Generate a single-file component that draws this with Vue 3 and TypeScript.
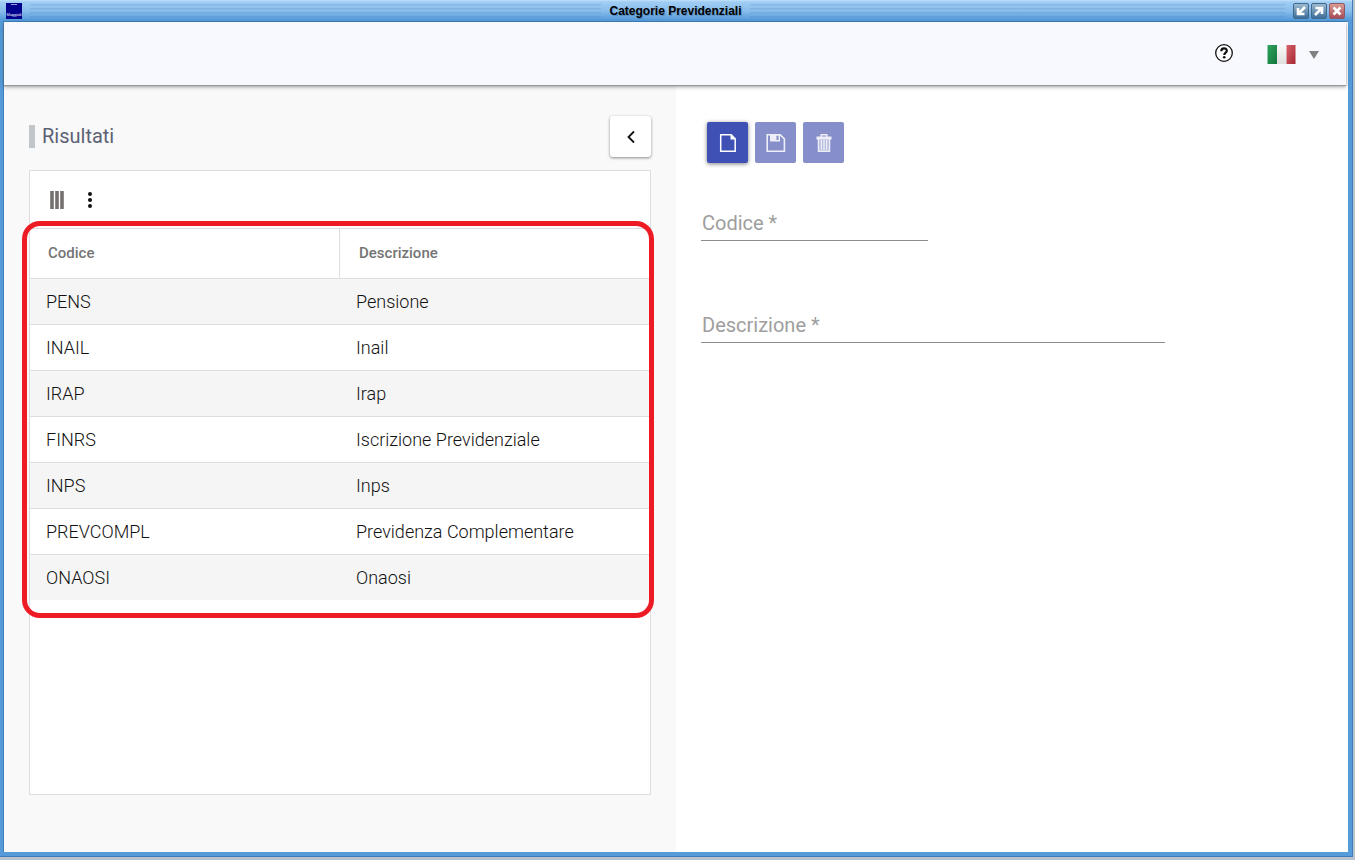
<script setup lang="ts">
import { ref } from 'vue'

interface Category {
  code: string
  description: string
}

const categories: Category[] = [
  { code: 'PENS', description: 'Pensione' },
  { code: 'INAIL', description: 'Inail' },
  { code: 'IRAP', description: 'Irap' },
  { code: 'FINRS', description: 'Iscrizione Previdenziale' },
  { code: 'INPS', description: 'Inps' },
  { code: 'PREVCOMPL', description: 'Previdenza Complementare' },
  { code: 'ONAOSI', description: 'Onaosi' },
]

const code = ref('')
const description = ref('')
</script>

<template>
  <div class="desktop">
    <div class="window">
      <header class="titlebar">
        <div class="side">
          <svg class="app-icon" viewBox="0 0 16 16" aria-hidden="true">
            <rect width="16" height="16" fill="#00008f" />
            <path d="M5 1.500h6" stroke="#9a9ad8" />
            <text x="8" y="13" text-anchor="middle">Maggioli</text>
          </svg>
          <span class="stripes"></span>
        </div>
        <h1 class="window-title">Categorie Previdenziali</h1>
        <div class="side">
          <span class="stripes"></span>
          <div class="window-buttons">
            <button type="button" class="win-btn" aria-label="Riduci">
              <svg viewBox="0 0 14 14"><path d="M11 3 5 9M4 4v6h6.500" /></svg>
            </button>
            <button type="button" class="win-btn" aria-label="Ingrandisci">
              <svg viewBox="0 0 14 14"><path d="M3 11l6-6M3.500 4H10v6" /></svg>
            </button>
            <button type="button" class="win-btn close" aria-label="Chiudi">
              <svg viewBox="0 0 14 14"><path d="M3.500 3.500l7 7M10.500 3.500l-7 7" /></svg>
            </button>
          </div>
        </div>
      </header>

      <div class="content">
        <div class="appbar">
          <button type="button" class="plain-btn" aria-label="Aiuto">
            <svg class="help" viewBox="0 0 20 20">
              <circle cx="10" cy="10" r="8.300" fill="#fff" stroke="#111" stroke-width="1.300" />
              <path d="M7.300 8.200c0-3.800 5.500-3.600 5.500-.5 0 1.900-2.500 2-2.500 4.300" fill="none" stroke="#111" stroke-width="2.200" />
              <circle cx="10.200" cy="14.300" r="1.300" fill="#111" />
            </svg>
          </button>
          <button type="button" class="plain-btn language" aria-label="Lingua: italiano" aria-haspopup="listbox">
            <svg class="flag" viewBox="0 0 28 19">
              <defs>
                <linearGradient id="green" x2="1" y2="1"><stop stop-color="#2fa35c" /><stop offset="1" stop-color="#11763c" /></linearGradient>
                <linearGradient id="white" x2="0" y2="1"><stop stop-color="#fafafa" /><stop offset="1" stop-color="#dedede" /></linearGradient>
                <linearGradient id="red" x2="1" y2="1"><stop stop-color="#d8636c" /><stop offset="1" stop-color="#a62730" /></linearGradient>
              </defs>
              <rect width="10" height="19" fill="url(#green)" />
              <rect x="9.500" width="9.500" height="19" fill="url(#white)" />
              <rect x="19" width="9" height="19" fill="url(#red)" />
            </svg>
            <svg class="caret" viewBox="0 0 10 8"><path d="M0 0h10L5 8z" fill="#808080" /></svg>
          </button>
        </div>

        <main class="panels">
          <section class="results">
            <div class="results-head">
              <h2 class="results-title">Risultati</h2>
              <button type="button" class="collapse" aria-label="Comprimi">
                <svg viewBox="0 0 12 14"><path d="M9 1.500 3.500 7 9 12.500" fill="none" stroke="#111" stroke-width="1.800" /></svg>
              </button>
            </div>

            <div class="card">
              <div class="card-tools">
                <button type="button" class="plain-btn" aria-label="Colonne">
                  <svg class="columns" viewBox="0 0 14 18"><path d="M2 0v18M7 0v18M12 0v18" stroke="#757070" stroke-width="3.600" /></svg>
                </button>
                <button type="button" class="plain-btn" aria-label="Altre azioni">
                  <svg class="dots" viewBox="0 0 4 18">
                    <circle cx="2" cy="3" r="2" /><circle cx="2" cy="9" r="2" /><circle cx="2" cy="15" r="2" />
                  </svg>
                </button>
              </div>
              <div class="table-wrap">
                <table>
                  <thead>
                    <tr><th scope="col">Codice</th><th scope="col">Descrizione</th></tr>
                  </thead>
                  <tbody>
                    <tr v-for="row in categories" :key="row.code">
                      <td>{{ row.code }}</td>
                      <td>{{ row.description }}</td>
                    </tr>
                  </tbody>
                </table>
                <div class="highlight"></div>
              </div>
            </div>
          </section>

          <form class="detail" @submit.prevent>
            <div class="actions">
              <button type="button" class="action" aria-label="Nuovo">
                <svg viewBox="0 0 20 20">
                  <path d="M2.700 1.700h10.500l4 4v12.600H2.700z" fill="none" stroke="#fff" stroke-width="1.500" />
                  <path d="M12.500 1.500v5h5z" fill="#fff" />
                </svg>
              </button>
              <button type="button" class="action" disabled aria-label="Salva">
                <svg viewBox="0 0 20 20">
                  <path d="M1.200 1.700h13l4.200 4.200v12.400H1.200z" fill="none" stroke="#fff" stroke-width="1.600" />
                  <path d="M4 1.500h10v7H4zM10.500 2.500v4.500h2V2.500z" fill="#fff" fill-rule="evenodd" />
                </svg>
              </button>
              <button type="button" class="action" disabled aria-label="Elimina">
                <svg viewBox="0 0 20 20">
                  <path d="M2.500 5h15" stroke="#fff" stroke-width="3" />
                  <path d="M4.500 6h11v12.500h-11z" fill="#fff" fill-opacity=".4" />
                  <path d="M7.200 4V1.800h5.600V4M4.500 6v12.300h11V6M7.400 7v10M10 7v10M12.600 7v10" fill="none" stroke="#fff" stroke-width="1.500" />
                </svg>
              </button>
            </div>
            <div class="field short">
              <label for="code">Codice *</label>
              <input id="code" v-model="code" type="text" placeholder=" " required />
            </div>
            <div class="field">
              <label for="description">Descrizione *</label>
              <input id="description" v-model="description" type="text" placeholder=" " required />
            </div>
          </form>
        </main>
      </div>
    </div>
  </div>
</template>

<style>
body {
  margin: 0;
}
</style>

<style scoped>
* {
  box-sizing: border-box;
}
.desktop {
  display: flex;
  min-height: 100vh;
  padding: 0 2px 3px 0;
  background: #b9c3ce;
  font-family: Roboto, "Liberation Sans", sans-serif;
}
.window {
  display: flex;
  flex: 1;
  flex-direction: column;
  border-right: 1px solid #3f7dba;
  border-bottom: 1px solid #3f7dba;
  background: #559bda;
}
.titlebar {
  display: grid;
  grid-template-columns: 1fr auto 1fr;
  align-items: center;
  gap: 8px;
  height: 21px;
  padding: 0 7px 0 6px;
  background: linear-gradient(#bfe0fa 0, #a0cdf3 2px, #89bdeb 11px, #559bda 20px);
}
.side {
  display: flex;
  align-items: center;
  gap: 8px;
}
.app-icon {
  width: 16px;
  height: 16px;
}
.app-icon text {
  fill: #fff;
  font: 400 4px/5px "Liberation Sans", sans-serif;
}
.stripes {
  flex: 1;
  height: 14px;
  background: repeating-linear-gradient(rgba(60, 125, 190, 0.2) 0, rgba(60, 125, 190, 0.2) 1px, transparent 2px, transparent 4px);
}
.window-title {
  margin: 0;
  color: #000;
  font: 700 12px/20px "Liberation Sans", Arial, sans-serif;
  text-shadow: 1px 1px 1px rgba(30, 80, 130, 0.4);
}
.window-buttons {
  display: flex;
  gap: 2px;
}
.win-btn {
  width: 16px;
  height: 16px;
  padding: 0;
  border: 1px solid #41698c;
  border-radius: 2px;
  background: linear-gradient(#9cb9d0, #3e6f99);
}
.win-btn.close {
  border-color: #8b5a68;
  background: linear-gradient(#d99b92, #a84b58);
}
.win-btn svg {
  display: block;
  width: 14px;
  height: 14px;
  fill: none;
  stroke: #fff;
  stroke-width: 2.6;
}
.content {
  display: flex;
  flex: 1;
  flex-direction: column;
  margin: 0 4px 4px 3px;
  border-top: 1px solid #3f7dba;
  border-left: 1px solid #3f7dba;
  background: #fff;
}
.appbar {
  z-index: 1;
  display: flex;
  align-items: center;
  justify-content: flex-end;
  gap: 33px;
  height: 63px;
  margin-right: 2px;
  padding: 0 27px 0 0;
  background: #f8f9fe;
  box-shadow: 0 1px 1px #999, 0 2px 4px rgba(0, 0, 0, 0.35);
}
.plain-btn {
  display: flex;
  align-items: center;
  padding: 0;
  border: 0;
  background: none;
}
.help {
  width: 20px;
  height: 20px;
  margin-bottom: 2px;
}
.language {
  gap: 13px;
  padding-top: 2px;
}
.flag {
  width: 29px;
  height: 19px;
}
.caret {
  width: 10px;
  height: 8px;
}
.panels {
  display: grid;
  flex: 1;
  grid-template-columns: 1fr 1fr;
}
.results {
  display: flex;
  flex-direction: column;
  padding: 31px 25px 57px;
  background: #f9f9f9;
}
.results-head {
  display: flex;
  align-items: center;
  justify-content: space-between;
  margin-bottom: 13px;
}
.results-title {
  margin: 0;
  padding-left: 7px;
  border-left: 6px solid #c1c6ca;
  color: #5c6273;
  font-size: 20px;
  font-weight: 400;
  line-height: 23px;
}
.collapse {
  display: flex;
  align-items: center;
  justify-content: center;
  width: 41px;
  height: 41px;
  padding: 0;
  border: 0;
  border-radius: 3px;
  background: #fff;
  box-shadow: 0 1px 3px rgba(0, 0, 0, 0.45);
}
.collapse svg {
  width: 12px;
  height: 14px;
}
.card {
  flex: 1;
  border: 1px solid #dedede;
  background: #fff;
}
.card-tools {
  display: flex;
  align-items: center;
  gap: 24px;
  height: 57px;
  padding-left: 20px;
}
.columns {
  width: 14px;
  height: 18px;
}
.dots {
  width: 4px;
  height: 18px;
  fill: #111;
}
.table-wrap {
  position: relative;
}
.highlight {
  position: absolute;
  inset: -7px -4px -18px -8px;
  border: 5px solid #ed1c24;
  border-radius: 18px;
  pointer-events: none;
}
table {
  width: 100%;
  border-collapse: separate;
  border-spacing: 0;
  border-top: 1px solid #dedede;
  table-layout: fixed;
  text-align: left;
}
th {
  height: 50px;
  padding: 0 18px 2px;
  border-bottom: 1px solid #dedede;
  color: #757575;
  font-size: 15px;
  font-weight: 500;
  line-height: 20px;
}
th + th {
  padding-left: 19px;
}
th:first-child {
  border-right: 1px solid #dedede;
}
td {
  height: 46px;
  padding: 0 16px;
  border-bottom: 1px solid #dedede;
  color: #111;
  font-size: 18px;
  font-weight: 300;
  line-height: 24px;
}
tbody tr:last-child td {
  height: 45px;
  border-bottom: 0;
}
tbody tr:nth-child(odd) {
  background: #f5f5f5;
}
.detail {
  padding: 37px 25px;
}
.actions {
  display: flex;
  gap: 7px;
  margin: 0 6px 48px;
}
.action {
  display: flex;
  align-items: center;
  justify-content: center;
  width: 41px;
  height: 41px;
  padding: 0;
  border: 0;
  border-radius: 2px;
  background: #3f51b5;
  box-shadow: 0 1px 4px rgba(0, 0, 0, 0.5);
}
.action:disabled {
  background: #868fca;
  box-shadow: none;
}
.action svg {
  width: 20px;
  height: 20px;
}
.action:disabled svg {
  opacity: 0.85;
}
.field {
  display: grid;
  max-width: 464px;
  margin-bottom: 72px;
}
.field.short {
  max-width: 227px;
}
.field label,
.field input {
  grid-area: 1 / 1;
  font-family: inherit;
  font-size: 20px;
  line-height: 24px;
}
.field label {
  padding: 0 1px;
  color: #9e9e9e;
  pointer-events: none;
}
.field:has(input:not(:placeholder-shown)) label {
  visibility: hidden;
}
.field input {
  width: 100%;
  height: 30px;
  padding: 0 1px 5px;
  border: 0;
  border-bottom: 1px solid #8c8c8c;
  outline: 0;
  background: none;
  color: #212121;
}
</style>
